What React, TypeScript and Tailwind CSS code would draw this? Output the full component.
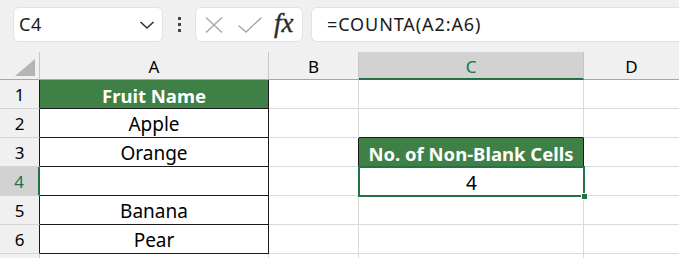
import React from "react";

const ui = { fontFamily: '"Noto Sans", "Open Sans", sans-serif' };
const cellFont = { fontFamily: '"Noto Sans", "Open Sans", sans-serif' };

const fruits = ["Apple", "Orange", "", "Banana", "Pear"];

function RowHeader({ n, selected, edge }: { n?: number; selected?: boolean; edge?: string }) {
  return (
    <div
      className={
        "flex items-center justify-center pt-[2px] text-[17px] border-b border-b-[#d4d4d4] " +
        (selected
          ? "bg-[#d2d2d2] text-[#217346] border-r-2 border-r-[#217346]"
          : "bg-[#f0f0f0] text-black border-r " + (edge ?? "border-r-[#c6c6c6]"))
      }
      style={ui}
    >
      {n}
    </div>
  );
}

export default function App() {
  return (
    <div className="w-[679px] h-[258px] overflow-hidden bg-white">
      {/* Toolbar */}
      <div className="h-[52px] bg-[#f0f0f0] flex items-start pt-[7px]" style={ui}>
        <div className="ml-[13px] w-[150px] h-[35px] bg-white rounded-[6px] border border-[#e2e2e2] flex items-center pl-[5px] pr-[7px]">
          <span className="text-[18px] tracking-[0.6px] text-[#1a1a1a]">C4</span>
          <svg className="ml-auto" width="16" height="10" viewBox="0 0 16 10">
            <path d="M1.5 2 L8 8 L14.5 2" fill="none" stroke="#333" strokeWidth="1.6" />
          </svg>
        </div>
        <div className="w-[32px] h-[35px] flex flex-col items-center justify-center gap-[3px]">
          <div className="w-[3px] h-[3px] bg-[#444]" />
          <div className="w-[3px] h-[3px] bg-[#444]" />
          <div className="w-[3px] h-[3px] bg-[#444]" />
        </div>
        <div className="w-[108px] h-[35px] bg-white rounded-[6px] border border-[#e2e2e2] flex items-center pl-[8px]">
          <svg width="20" height="18" viewBox="0 0 20 18">
            <path d="M2 1.5 L18 16.5 M18 1.5 L2 16.5" stroke="#a6a6a6" strokeWidth="1.4" fill="none" />
          </svg>
          <svg className="ml-[13px]" width="26" height="18" viewBox="0 0 26 18">
            <path d="M1.5 9.5 L9 16 L24.5 1.5" stroke="#a6a6a6" strokeWidth="1.4" fill="none" />
          </svg>
          <span
            className="ml-[11px] text-[27px] italic leading-none text-[#2b2b2b] -mt-[3px] [-webkit-text-stroke:0.4px_#2b2b2b]"
            style={{ fontFamily: '"Liberation Serif", "DejaVu Serif", serif' }}
          >
            fx
          </span>
        </div>
        <div className="ml-[8px] flex-1 h-[35px] bg-white rounded-l-[6px] border border-r-0 border-[#e2e2e2] flex items-center pl-[15px]">
          <span className="text-[18px] tracking-[0.9px] text-[#1a1a1a]">=COUNTA(A2:A6)</span>
        </div>
      </div>

      {/* Grid */}
      <div
        className="grid grid-cols-[40px_229px_90px_225px_1fr] grid-rows-[28px_29px_29px_29px_29px_29px_29px_29px]"
        style={cellFont}
      >
        {/* Column headers */}
        <div className="bg-[#f0f0f0] border-r border-r-[#c6c6c6] border-b border-b-[#a6a6a6] relative">
          <div className="absolute right-[4px] bottom-[3px] w-0 h-0 border-l-[20px] border-l-transparent border-b-[17px] border-b-[#b4b4b4]" />
        </div>
        <div className="bg-[#f0f0f0] border-r border-r-[#c6c6c6] border-b border-b-[#a6a6a6] flex items-center justify-center pt-[2px] text-[17px] text-black" style={ui}>A</div>
        <div className="bg-[#f0f0f0] border-r border-r-[#c6c6c6] border-b border-b-[#a6a6a6] flex items-center justify-center pt-[2px] text-[17px] text-black" style={ui}>B</div>
        <div className="bg-[#d2d2d2] border-r border-r-[#c6c6c6] border-b-2 border-b-[#217346] flex items-center justify-center pt-[3px] text-[17px] text-[#217346]" style={ui}>C</div>
        <div className="bg-[#f0f0f0] border-b border-b-[#a6a6a6] flex items-center justify-center pt-[2px] text-[17px] text-black" style={ui}>D</div>

        {/* Row 1 */}
        <RowHeader n={1} edge="border-r-[#1a1a1a]" />
        <div className="bg-[#3f8047] border-r border-b border-[#1a1a1a] flex items-center justify-center pt-[3px] text-[18.5px] font-bold text-white">Fruit Name</div>
        <div className="border-r border-b border-[#dadada]" />
        <div className="border-r border-b border-[#dadada]" />
        <div className="border-b border-[#dadada]" />

        {/* Rows 2-6 */}
        {fruits.map((f, i) => {
          const row = i + 2;
          return (
            <React.Fragment key={row}>
              <RowHeader n={row} selected={row === 4} edge="border-r-[#1a1a1a]" />
              <div className="border-r border-b border-[#1a1a1a] flex items-center justify-center pt-[3px] text-[19px] text-black">{f}</div>
              <div className={"border-b border-[#dadada] border-r " + (row === 3 ? "border-r-[#1a1a1a]" : "")} />
              {row === 3 ? (
                <div className="bg-[#3f8047] border-r border-b border-[#1a1a1a] flex items-center justify-center pt-[3px] text-[18.5px] font-bold text-white">
                  No. of Non-Blank Cells
                </div>
              ) : row === 4 ? (
                <div className="relative flex items-center justify-center pt-[3px] text-[19px] text-black">
                  4
                  <div className="absolute -left-[1px] -top-[1px] -right-[1px] -bottom-[1px] border-2 border-[#217346]" />
                  <div className="absolute -right-[4px] -bottom-[4px] w-[7px] h-[7px] bg-[#217346] border border-white" />
                </div>
              ) : (
                <div className={"border-r border-b border-[#dadada] " + (row === 2 ? "border-b-[#1a1a1a]" : "")} />
              )}
              <div className="border-b border-[#dadada]" />
            </React.Fragment>
          );
        })}

        {/* Row 7, cut off at the bottom edge */}
        <RowHeader />
        <div className="border-r border-b border-[#dadada]" />
        <div className="border-r border-b border-[#dadada]" />
        <div className="border-r border-b border-[#dadada]" />
        <div className="border-b border-[#dadada]" />
      </div>
    </div>
  );
}
